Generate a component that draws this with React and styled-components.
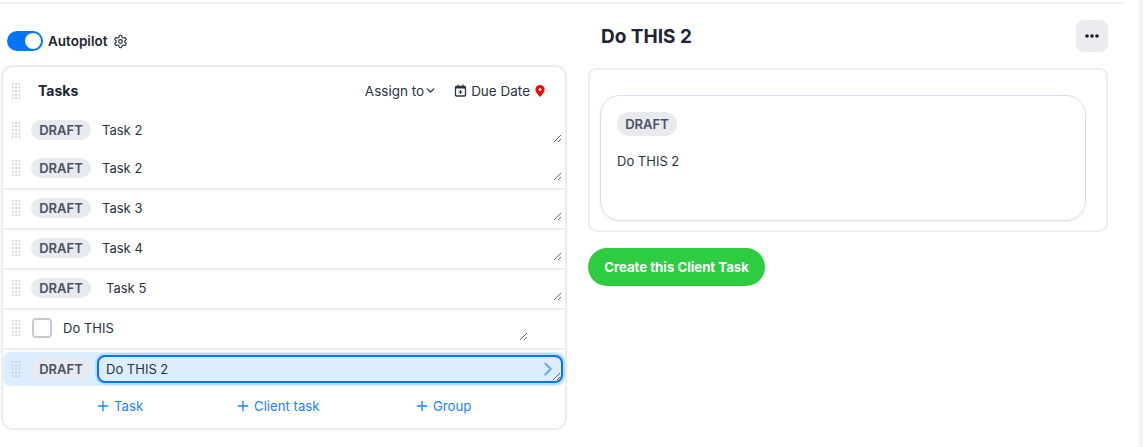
import React from "react";
import styled, {createGlobalStyle} from "styled-components";
import {LuSettings, LuChevronDown, LuPlus, LuChevronRight} from "react-icons/lu";

const GlobalStyle = createGlobalStyle`
  html, body {
    margin: 0;
    padding: 0;
    background: #fff;
    font-family: "Inter", "Liberation Sans", sans-serif;
    color: #1d2433;
  }
`;

const Page = styled.div`
  width: 1143px;
  height: 447px;
  box-sizing: border-box;
  position: relative;
  overflow: hidden;
  border-right: 4px solid #f0f0f5;
`;

const TopRule = styled.div`
  height: 2px;
  margin: 2px 16px 0 0;
  background: #f0f0f5;
`;

const Columns = styled.div`
  display: flex;
  align-items: flex-start;
  gap: 21px;
  padding-left: 1px;
`;

const LeftColumn = styled.div`
  width: 566px;
  flex: none;
`;

const RightColumn = styled.div`
  width: 520px;
  flex: none;
`;

const AutopilotBar = styled.div`
  display: flex;
  align-items: center;
  height: 20px;
  margin: 27px 0 14px 6px;
  gap: 5px;
`;

const Toggle = styled.span`
  display: flex;
  justify-content: flex-end;
  align-items: center;
  width: 36px;
  height: 20px;
  box-sizing: border-box;
  padding: 2px;
  border-radius: 10px;
  background: #0073ff;

  &::after {
    content: "";
    width: 16px;
    height: 16px;
    border-radius: 50%;
    background: #fff;
  }
`;

const AutopilotLabel = styled.span`
  font-size: 13.5px;
  font-weight: 600;
`;

const SettingsIcon = styled(LuSettings)`
  width: 15px;
  height: 15px;
  margin-left: 1px;
  stroke-width: 1.75;
`;

const Panel = styled.div`
  height: 365px;
  box-sizing: border-box;
  border: 2px solid #ececf1;
  border-radius: 12px;
`;

const Header = styled.div`
  display: flex;
  align-items: center;
  box-sizing: border-box;
  height: 44px;
  padding: 3px 20px 0 8px;
`;

const Grip = styled.span`
  flex: none;
  width: 10px;
  height: 18px;
  background-image: radial-gradient(circle, #cfcfd3 1.1px, transparent 1.3px);
  background-size: 3.4px 3.6px;
`;

const HeaderTitle = styled.div`
  font-size: 14px;
  font-weight: 700;
  margin-left: 17px;
  flex: 1;
`;

const HeaderAction = styled.div`
  display: flex;
  align-items: center;
  font-size: 13.5px;
  color: #2b3240;
  margin-left: ${(p) => p.$gap || 0}px;
`;

const AssignChevron = styled(LuChevronDown)`
  width: 13px;
  height: 13px;
  stroke-width: 2.5;
`;

const CalendarIcon = styled.svg`
  width: 13px;
  height: 13px;
  margin-right: 4px;
  flex: none;
`;

const PinIcon = styled.svg`
  width: 10px;
  height: 12px;
  margin-left: 5px;
  flex: none;
`;

const Row = styled.div`
  display: flex;
  align-items: center;
  height: ${(p) => p.$height}px;
  padding: 0 0 ${(p) => p.$bottom || 0}px 8px;
  box-sizing: border-box;
  border-bottom: ${(p) => (p.$divided ? "2px solid #ececf1" : "none")};
`;

const ActiveRow = styled.div`
  display: flex;
  align-items: center;
  height: 34px;
  margin-top: 2px;
  padding-left: 8px;
  background: #dcedfd;
  border-radius: 8px;
`;

const Badge = styled.span`
  flex: none;
  display: inline-flex;
  align-items: center;
  justify-content: center;
  width: 60px;
  height: ${(p) => p.$height || 20}px;
  border-radius: 12px;
  background: #e8eaef;
  color: #4a5266;
  font-size: 13px;
  font-weight: 600;
  margin-left: ${(p) => p.$left ?? 10}px;
`;

const Checkbox = styled.span`
  flex: none;
  width: 16px;
  height: 16px;
  margin-left: 11px;
  border: 2px solid #c9c9cd;
  border-radius: 4px;
`;

const TaskInput = styled.textarea`
  display: block;
  box-sizing: border-box;
  height: 26px;
  width: ${(p) => p.$width}px;
  margin-left: 11px;
  padding: 4px 0 0 ${(p) => p.$pad || 0}px;
  border: none;
  outline: none;
  background: transparent;
  font-family: inherit;
  font-size: 13px;
  line-height: 18px;
  color: #2b3240;
  overflow: hidden;
`;

const ActiveInputWrap = styled.div`
  position: relative;
  margin-left: 6px;
`;

const ActiveInput = styled.textarea`
  display: block;
  box-sizing: border-box;
  width: 466px;
  height: 28px;
  padding: 3px 0 0 7px;
  border: 2px solid #0073ff;
  border-radius: 8px;
  outline: none;
  box-shadow: 0 0 0 2px #bcdcfa;
  background: #dcedfd;
  font-family: inherit;
  font-size: 13px;
  line-height: 18px;
  color: #2b3240;
  overflow: hidden;
`;

const SendArrow = styled(LuChevronRight)`
  position: absolute;
  right: 4px;
  top: 2px;
  width: 22px;
  height: 24px;
  color: #60a8ff;
`;

const Footer = styled.div`
  display: flex;
  align-items: center;
  height: 40px;
  padding-left: 92px;
`;

const AddLink = styled.span`
  display: flex;
  align-items: center;
  gap: 3px;
  font-size: 13.2px;
  color: #1a82ff;
  width: ${(p) => p.$width}px;
`;

const TitleBar = styled.div`
  display: flex;
  align-items: center;
  justify-content: space-between;
  height: 32px;
  margin: 16px 0 16px;
  padding-left: 13px;
`;

const Title = styled.h1`
  margin: 0;
  font-size: 19px;
  font-weight: 700;
  color: #1d2433;
`;

const MoreButton = styled.button`
  display: flex;
  align-items: center;
  justify-content: center;
  width: 32px;
  height: 32px;
  padding: 0;
  border: none;
  border-radius: 8px;
  background: #ebecf0;
`;

const OuterCard = styled.div`
  box-sizing: border-box;
  height: 164px;
  padding: 25px 20px 9px 10px;
  border: 2px solid #eeeef3;
  border-radius: 8px;
`;

const InnerCard = styled.div`
  box-sizing: border-box;
  height: 126px;
  padding: 16px;
  border: 1px solid #dcdcec;
  border-radius: 20px;
  box-shadow: 0 1px 3px rgba(60, 60, 110, 0.08);
`;

const CardText = styled.div`
  margin-top: 16px;
  font-size: 13px;
  line-height: 18px;
  color: #2b3240;
`;

const CreateButton = styled.button`
  display: block;
  width: 177px;
  height: 38px;
  margin-top: 16px;
  padding: 0;
  border: none;
  border-radius: 19px;
  background: #2ecc40;
  color: #fff;
  font-family: inherit;
  font-size: 13.2px;
  font-weight: 700;
`;

const tasks = [
    {text: "Task 3"},
    {text: "Task 4"},
    {text: "Task 5", pad: 4},
];

const noop = () => {};

function App() {
    return (
        <Page>
            <GlobalStyle/>
            <TopRule/>
            <Columns>
                <LeftColumn>
                    <AutopilotBar>
                        <Toggle/>
                        <AutopilotLabel>Autopilot</AutopilotLabel>
                        <SettingsIcon/>
                    </AutopilotBar>
                    <Panel>
                        <Header>
                            <Grip/>
                            <HeaderTitle>Tasks</HeaderTitle>
                            <HeaderAction>
                                Assign to
                                <AssignChevron/>
                            </HeaderAction>
                            <HeaderAction $gap={17}>
                                <CalendarIcon viewBox="0 0 13 13" fill="none" stroke="#2b3240">
                                    <rect x="1.5" y="2.5" width="10" height="9.5" rx="1" strokeWidth="1.3"/>
                                    <path d="M1.5 3.5h10" strokeWidth="2"/>
                                    <path d="M4 0.5v2M9 0.5v2M6.5 6v4M4.5 8h4" strokeWidth="1.2"/>
                                </CalendarIcon>
                                Due Date
                                <PinIcon viewBox="0 0 10 12">
                                    <path fillRule="evenodd" fill="#ff0000" d="M5 0a4.6 4.6 0 0 1 4.6 4.6C9.600 7.400 6.500 10.300 5 12 3.500 10.300 0.400 7.400 0.400 4.600A4.600 4.600 0 0 1 5 0zm0 3.100a1.500 1.500 0 1 0 0 3 1.500 1.500 0 0 0 0-3z"/>
                                </PinIcon>
                            </HeaderAction>
                        </Header>
                        <Row $height={38}>
                            <Grip/>
                            <Badge>DRAFT</Badge>
                            <TaskInput $width={460} readOnly value="Task 2" onChange={noop}/>
                        </Row>
                        <Row $height={41} $bottom={1} $divided>
                            <Grip/>
                            <Badge>DRAFT</Badge>
                            <TaskInput $width={460} readOnly value="Task 2" onChange={noop}/>
                        </Row>
                        {tasks.map((t, i) => (
                            <Row $height={40} $bottom={2} $divided key={i}>
                                <Grip/>
                                <Badge>DRAFT</Badge>
                                <TaskInput $width={460} $pad={t.pad} readOnly value={t.text} onChange={noop}/>
                            </Row>
                        ))}
                        <Row $height={40} $bottom={2} $divided>
                            <Grip/>
                            <Checkbox/>
                            <TaskInput $width={465} readOnly value="Do THIS" onChange={noop}/>
                        </Row>
                        <ActiveRow>
                            <Grip/>
                            <Badge>DRAFT</Badge>
                            <ActiveInputWrap>
                                <ActiveInput readOnly value="Do THIS 2" onChange={noop}/>
                                <SendArrow/>
                            </ActiveInputWrap>
                        </ActiveRow>
                        <Footer>
                            <AddLink $width={140}><LuPlus size={16}/>Task</AddLink>
                            <AddLink $width={179}><LuPlus size={16}/>Client task</AddLink>
                            <AddLink $width={80}><LuPlus size={16}/>Group</AddLink>
                        </Footer>
                    </Panel>
                </LeftColumn>
                <RightColumn>
                    <TitleBar>
                        <Title>Do THIS 2</Title>
                        <MoreButton>
                            <svg width="14" height="4" viewBox="0 0 14 4">
                                <circle cx="2" cy="2" r="1.8" fill="#1a1f2c"/>
                                <circle cx="7" cy="2" r="1.8" fill="#1a1f2c"/>
                                <circle cx="12" cy="2" r="1.8" fill="#1a1f2c"/>
                            </svg>
                        </MoreButton>
                    </TitleBar>
                    <OuterCard>
                        <InnerCard>
                            <Badge $left={0} $height={24}>DRAFT</Badge>
                            <CardText>Do THIS 2</CardText>
                        </InnerCard>
                    </OuterCard>
                    <CreateButton>Create this Client Task</CreateButton>
                </RightColumn>
            </Columns>
        </Page>
    );
}

export default App;
